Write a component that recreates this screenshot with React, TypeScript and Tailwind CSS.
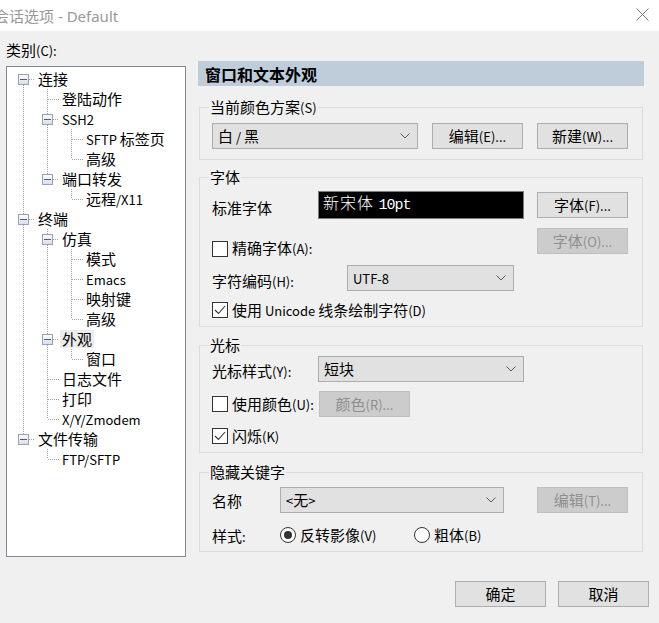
import React from "react";

function L({ t }: { t: string }) {
  const parts = t.split(/([\u3000-\u303f\u4e00-\u9fff\uff00-\uffef]+)/).filter((p) => p.length > 0);
  return (
    <>
      {parts.map((p, i) =>
        /[\u3000-\u303f\u4e00-\u9fff\uff00-\uffef]/.test(p) ? (
          <React.Fragment key={i}>{p}</React.Fragment>
        ) : (
          <span key={i} className="text-[13px]">
            {p}
          </span>
        )
      )}
    </>
  );
}

type Raw = { label: string; level: number; selected?: boolean };

const RAW: Raw[] = [
  { label: "连接", level: 0 },
  { label: "登陆动作", level: 1 },
  { label: "SSH2", level: 1 },
  { label: "SFTP 标签页", level: 2 },
  { label: "高级", level: 2 },
  { label: "端口转发", level: 1 },
  { label: "远程/X11", level: 2 },
  { label: "终端", level: 0 },
  { label: "仿真", level: 1 },
  { label: "模式", level: 2 },
  { label: "Emacs", level: 2 },
  { label: "映射键", level: 2 },
  { label: "高级", level: 2 },
  { label: "外观", level: 1, selected: true },
  { label: "窗口", level: 2 },
  { label: "日志文件", level: 1 },
  { label: "打印", level: 1 },
  { label: "X/Y/Zmodem", level: 1 },
  { label: "文件传输", level: 0 },
  { label: "FTP/SFTP", level: 1 },
];

function computeRows() {
  const hasNext = RAW.map((r, i) => {
    for (let j = i + 1; j < RAW.length; j++) {
      if (RAW[j].level < r.level) return false;
      if (RAW[j].level === r.level) return true;
    }
    return false;
  });
  const hasChildren = RAW.map((r, i) => i + 1 < RAW.length && RAW[i + 1].level > r.level);
  return RAW.map((r, i) => {
    const anc: boolean[] = [];
    for (let d = 0; d < r.level; d++) {
      let k = i - 1;
      while (k >= 0 && RAW[k].level !== d) k--;
      anc.push(k >= 0 ? hasNext[k] : false);
    }
    return { ...r, hasNext: hasNext[i], hasChildren: hasChildren[i], anc, first: i === 0 };
  });
}

const LINE = "#a0a0a0";

function Cell({ vTop, vBottom, horiz, box }: { vTop?: boolean; vBottom?: boolean; horiz?: boolean; box?: boolean }) {
  return (
    <svg width="24" height="20" className="shrink-0 block">
      {vTop && <line x1="12.5" y1="0" x2="12.5" y2="10" stroke={LINE} strokeDasharray="1 1" />}
      {vBottom && <line x1="12.5" y1="10" x2="12.5" y2="20" stroke={LINE} strokeDasharray="1 1" />}
      {horiz && <line x1={box ? 18 : 13} y1="10.5" x2="24" y2="10.5" stroke={LINE} strokeDasharray="1 1" />}
      {box && (
        <>
          <defs>
            <linearGradient id="bx" x1="0" y1="0" x2="0" y2="1">
              <stop offset="0" stopColor="#ffffff" />
              <stop offset="1" stopColor="#d9dde6" />
            </linearGradient>
          </defs>
          <rect x="7.5" y="5.5" width="10" height="10" fill="url(#bx)" stroke="#98a2b6" />
          <line x1="9" y1="10.5" x2="16" y2="10.5" stroke="#4a5a80" strokeWidth="1" />
        </>
      )}
    </svg>
  );
}

function Tree() {
  const rows = computeRows();
  return (
    <div className="w-[180px] h-[491px] bg-white border border-[#828790] pt-[2px] pl-[4px] overflow-hidden">
      {rows.map((r, i) => (
        <div key={i} className="flex h-[20px] items-center">
          {r.anc.map((a, d) => (
            <Cell key={d} vTop={a} vBottom={a} />
          ))}
          <Cell vTop={!r.first} vBottom={r.hasNext} horiz box={r.hasChildren} />
          <span
            className={
              "ml-[1px] px-[2px] h-[18px] leading-[18px] whitespace-nowrap text-[15px] text-black " +
              (r.selected ? "bg-[#ececec]" : "")
            }
          >
            <L t={r.label} />
          </span>
        </div>
      ))}
    </div>
  );
}

function Chevron() {
  return (
    <svg width="10" height="6" className="block">
      <polyline points="0.5,0.5 5,5 9.5,0.5" fill="none" stroke="#5a5a5a" strokeWidth="1" />
    </svg>
  );
}

function Combo({ w, text }: { w: string; text: string }) {
  return (
    <div className={w + " h-[26px] bg-[#e1e1e1] border border-[#adadad] flex items-center pl-[5px] pr-[7px]"}>
      <span className="text-[15px] leading-[20px] text-black whitespace-pre flex-1">
        <L t={text} />
      </span>
      <Chevron />
    </div>
  );
}

function Btn({ t, disabled, w = "w-[91px]" }: { t: string; disabled?: boolean; w?: string }) {
  return (
    <div
      className={
        w +
        " h-[26px] shrink-0 flex items-center justify-center text-[15px] leading-[20px] border whitespace-nowrap " +
        (disabled ? "bg-[#cccccc] border-[#bfbfbf] text-[#8f8f8f]" : "bg-[#e1e1e1] border-[#adadad] text-black")
      }
    >
      <span>
        <L t={t} />
      </span>
    </div>
  );
}

function Check({ checked }: { checked?: boolean }) {
  return (
    <div className="w-[16px] h-[16px] shrink-0 bg-white border border-[#333333] flex items-center justify-center">
      {checked && (
        <svg width="14" height="14" className="block">
          <polyline points="2,7 5.5,10.5 12,3" fill="none" stroke="#333333" strokeWidth="1.1" />
        </svg>
      )}
    </div>
  );
}

function Radio({ checked }: { checked?: boolean }) {
  return (
    <div className="w-[16px] h-[16px] shrink-0 rounded-full bg-white border border-[#333333] flex items-center justify-center">
      {checked && <div className="w-[8px] h-[8px] rounded-full bg-[#333333]" />}
    </div>
  );
}

function Group({ legend, className, children }: { legend: string; className: string; children: React.ReactNode }) {
  return (
    <div className={"relative mx-[1px] border border-[#dcdcdc] pl-[12px] " + className}>
      <span className="absolute top-[-11px] left-[9px] px-[1px] bg-[#f0f0f0] text-[15px] leading-[20px] text-black whitespace-nowrap">
        <L t={legend} />
      </span>
      {children}
    </div>
  );
}

const T = "text-[15px] leading-[20px] text-black whitespace-nowrap";

function Lbl({ t, className = "" }: { t: string; className?: string }) {
  return (
    <span className={T + " " + className}>
      <L t={t} />
    </span>
  );
}

export default function App() {
  return (
    <div className="w-[659px] h-[623px] bg-[#f0f0f0] overflow-hidden font-['Noto_Sans_CJK_SC','Noto_Sans',sans-serif]">
      {/* title bar */}
      <div className="h-[31px] bg-white flex items-center">
        <span className="ml-[-6px] text-[15px] leading-[20px] text-[#999999] whitespace-nowrap font-['Noto_Sans','Noto_Sans_CJK_SC',sans-serif]">
          会话选项 - Default
        </span>
        <svg width="13" height="13" className="ml-auto mr-[10px] mb-[3px] block">
          <line x1="0.5" y1="0.5" x2="12.5" y2="12.5" stroke="#7a7a7a" strokeWidth="1" />
          <line x1="12.5" y1="0.5" x2="0.5" y2="12.5" stroke="#7a7a7a" strokeWidth="1" />
        </svg>
      </div>

      <div className="flex">
        {/* left */}
        <div className="w-[198px] shrink-0 pl-[6px] pt-[9px]">
          <div className={T + " h-[20px]"}>
            <L t="类别(C):" />
          </div>
          <div className="mt-[6px]">
            <Tree />
          </div>
        </div>

        {/* right */}
        <div className="w-[446px] shrink-0 pt-[30px]">
          <div className="h-[25px] bg-[#bfcddb] pl-[7px] flex items-center">
            <span className="text-[16px] leading-[20px] font-bold text-black">窗口和文本外观</span>
          </div>

          <Group legend="当前颜色方案(S)" className="mt-[21px] pt-[15px] pb-[10px]">
            <div className="flex items-center">
              <Combo w="w-[206px]" text="白 / 黑" />
              <div className="ml-[14px]">
                <Btn t="编辑(E)..." />
              </div>
              <div className="ml-[14px]">
                <Btn t="新建(W)..." />
              </div>
            </div>
          </Group>

          <Group legend="字体" className="mt-[17px] pt-[13px] pb-[6px]">
            <div className="flex items-center h-[28px]">
              <div className="w-[106px] mt-[4px]">
                <Lbl t="标准字体" />
              </div>
              <div className="w-[206px] h-[28px] bg-black border border-[#7a7a7a] flex items-center pl-[4px]">
                <span className="text-white text-[16px] leading-[20px] tracking-[1px] whitespace-pre font-light mb-[2px]">
                  新宋体 <span className="font-['Liberation_Mono',monospace] font-normal text-[15px] tracking-[-1px]">10pt</span>
                </span>
              </div>
              <div className="ml-[13px]">
                <Btn t="字体(F)..." />
              </div>
            </div>
            <div className="flex items-start h-[26px] mt-[9px]">
              <div className="w-[325px] flex items-center gap-[4px] mt-[10px]">
                <Check />
                <Lbl t="精确字体(A):" />
              </div>
              <Btn t="字体(O)..." disabled />
            </div>
            <div className="flex items-center h-[26px] mt-[11px]">
              <div className="w-[135px] mt-[3px]">
                <Lbl t="字符编码(H):" />
              </div>
              <Combo w="w-[167px]" text="UTF-8" />
            </div>
            <div className="flex items-center gap-[4px] h-[20px] mt-[9px]">
              <Check checked />
              <Lbl t="使用 Unicode 线条绘制字符(D)" />
            </div>
          </Group>

          <Group legend="光标" className="mt-[18px] pt-[10px] pb-[6px]">
            <div className="flex items-center h-[26px]">
              <div className="w-[106px] mt-[2px]">
                <Lbl t="光标样式(Y):" />
              </div>
              <Combo w="w-[206px]" text="短块" />
            </div>
            <div className="flex items-center h-[26px] mt-[9px]">
              <div className="w-[107px] flex items-center gap-[4px]">
                <Check />
                <Lbl t="使用颜色(U):" />
              </div>
              <Btn t="颜色(R)..." disabled />
            </div>
            <div className="flex items-center gap-[4px] h-[20px] mt-[9px]">
              <Check checked />
              <Lbl t="闪烁(K)" />
            </div>
          </Group>

          <Group legend="隐藏关键字" className="mt-[19px] pt-[14px] pb-[6px]">
            <div className="flex items-center h-[26px]">
              <div className="w-[68px]">
                <Lbl t="名称" />
              </div>
              <Combo w="w-[224px]" text="<无>" />
              <div className="ml-[33px]">
                <Btn t="编辑(T)..." disabled />
              </div>
            </div>
            <div className="flex items-center h-[20px] mt-[12px]">
              <div className="w-[68px]">
                <Lbl t="样式:" />
              </div>
              <div className="w-[134px] flex items-center gap-[4px]">
                <Radio checked />
                <Lbl t="反转影像(V)" />
              </div>
              <div className="flex items-center gap-[4px]">
                <Radio />
                <Lbl t="粗体(B)" />
              </div>
            </div>
          </Group>
        </div>
      </div>

      <div className="flex justify-end gap-[12px] pr-[10px] mt-[24px]">
        <Btn t="确定" />
        <Btn t="取消" />
      </div>
    </div>
  );
}
